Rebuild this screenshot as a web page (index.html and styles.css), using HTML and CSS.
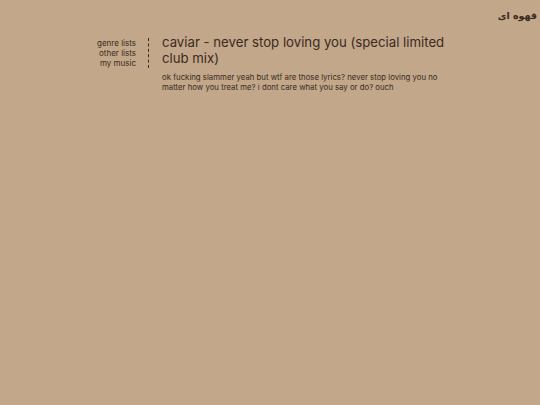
FILE: index.html
```html
<!DOCTYPE html>
<html>
<head>
<meta charset="utf-8">
<link rel="stylesheet" href="styles.css">
</head>
<body>
<header class="top">
  <span class="brand" dir="rtl">قهوه ای</span>
</header>
<div class="layout">
  <nav class="nav">
    <a href="#">genre lists</a>
    <a href="#">other lists</a>
    <a href="#">my music</a>
  </nav>
  <main class="content">
    <h1 class="title">caviar - never stop loving you (special limited club mix)</h1>
    <p class="desc">ok fucking slammer yeah but wtf are those lyrics? never stop loving you no matter how you treat me? i dont care what you say or do? ouch</p>
  </main>
</div>
</body>
</html>
```
FILE: styles.css
```css
html, body {
  margin: 0;
  padding: 0;
  background: #c2a78a;
  color: #3b2a1e;
  font-family: "Inter", "Noto Sans", sans-serif;
}
body {
  width: 540px;
  height: 405px;
}
.top {
  display: flex;
  justify-content: flex-end;
  padding: 9px 3px 0 0;
  height: 19px;
}
.brand {
  font-family: "DejaVu Sans", sans-serif;
  font-weight: bold;
  font-size: 9.5px;
  line-height: 13px;
}
.layout {
  display: flex;
  align-items: flex-start;
  padding: 10px 0 0 76px;
}
.nav {
  width: 60px;
  display: flex;
  flex-direction: column;
  align-items: flex-end;
  padding: 1px 12px 0 0;
  border-right: 1px dashed #3b2a1e;
}
.nav a {
  color: #3b2a1e;
  text-decoration: none;
  font-size: 8px;
  line-height: 9.8px;
}
.content {
  margin-left: 13px;
  width: 288px;
}
.title {
  margin: -3px 0 0;
  font-weight: 400;
  font-size: 13.2px;
  line-height: 15.5px;
}
.desc {
  margin: 6px 0 0;
  font-size: 7.8px;
  line-height: 10px;
}
```
